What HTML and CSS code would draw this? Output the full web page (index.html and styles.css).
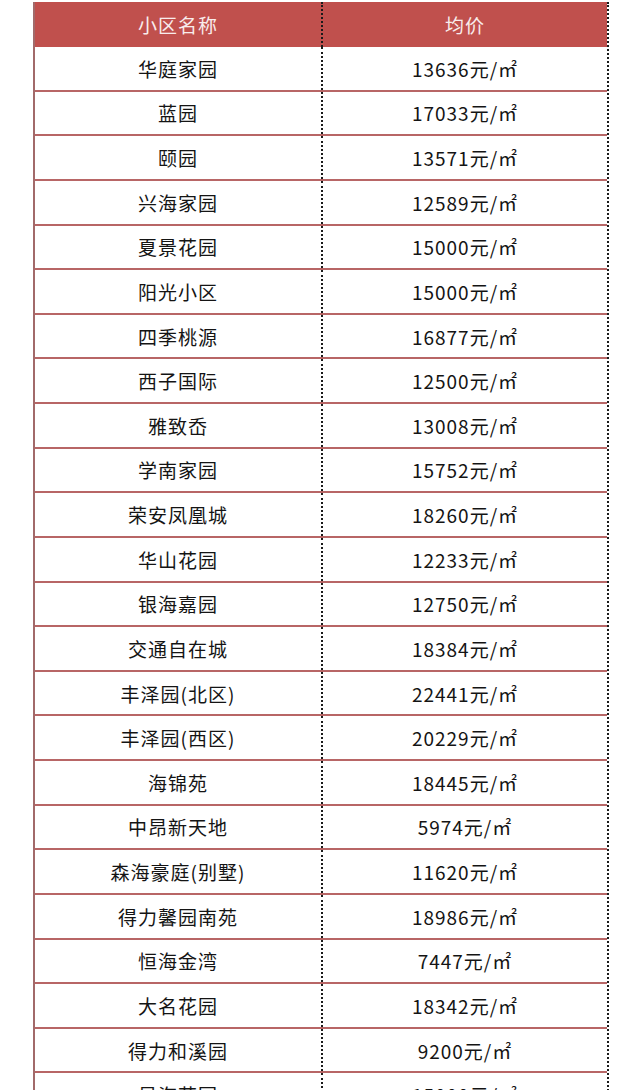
FILE: index.html
```html
<!DOCTYPE html>
<html lang="zh">
<head>
<meta charset="utf-8">
<link rel="stylesheet" href="styles.css">
</head>
<body>
<div class="table">
  <div class="row head"><div class="cell">小区名称</div><div class="cell price">均价</div></div>
  <div class="row"><div class="cell">华庭家园</div><div class="cell price">13636元/㎡</div></div>
  <div class="row"><div class="cell">蓝园</div><div class="cell price">17033元/㎡</div></div>
  <div class="row"><div class="cell">颐园</div><div class="cell price">13571元/㎡</div></div>
  <div class="row"><div class="cell">兴海家园</div><div class="cell price">12589元/㎡</div></div>
  <div class="row"><div class="cell">夏景花园</div><div class="cell price">15000元/㎡</div></div>
  <div class="row"><div class="cell">阳光小区</div><div class="cell price">15000元/㎡</div></div>
  <div class="row"><div class="cell">四季桃源</div><div class="cell price">16877元/㎡</div></div>
  <div class="row"><div class="cell">西子国际</div><div class="cell price">12500元/㎡</div></div>
  <div class="row"><div class="cell">雅致岙</div><div class="cell price">13008元/㎡</div></div>
  <div class="row"><div class="cell">学南家园</div><div class="cell price">15752元/㎡</div></div>
  <div class="row"><div class="cell">荣安凤凰城</div><div class="cell price">18260元/㎡</div></div>
  <div class="row"><div class="cell">华山花园</div><div class="cell price">12233元/㎡</div></div>
  <div class="row"><div class="cell">银海嘉园</div><div class="cell price">12750元/㎡</div></div>
  <div class="row"><div class="cell">交通自在城</div><div class="cell price">18384元/㎡</div></div>
  <div class="row"><div class="cell">丰泽园(北区)</div><div class="cell price">22441元/㎡</div></div>
  <div class="row"><div class="cell">丰泽园(西区)</div><div class="cell price">20229元/㎡</div></div>
  <div class="row"><div class="cell">海锦苑</div><div class="cell price">18445元/㎡</div></div>
  <div class="row"><div class="cell">中昂新天地</div><div class="cell price">5974元/㎡</div></div>
  <div class="row"><div class="cell">森海豪庭(别墅)</div><div class="cell price">11620元/㎡</div></div>
  <div class="row"><div class="cell">得力馨园南苑</div><div class="cell price">18986元/㎡</div></div>
  <div class="row"><div class="cell">恒海金湾</div><div class="cell price">7447元/㎡</div></div>
  <div class="row"><div class="cell">大名花园</div><div class="cell price">18342元/㎡</div></div>
  <div class="row"><div class="cell">得力和溪园</div><div class="cell price">9200元/㎡</div></div>
  <div class="row"><div class="cell">星海花园</div><div class="cell price">15000元/㎡</div></div>
</div>
</body>
</html>
```
FILE: styles.css
```css
html, body {
  margin: 0;
  padding: 0;
  background: #ffffff;
}
body {
  font-family: "Noto Sans CJK SC", "Noto Sans", sans-serif;
  color: #141414;
}
.table {
  margin: 2px 0 0 33px;
  width: 576px;
  border-left: 2px solid #a26a6a;
  border-right: 2px dotted #1a1a1a;
  box-sizing: border-box;
}
.row {
  display: grid;
  grid-template-columns: 286px 286px;
  height: 44.64px;
  box-sizing: border-box;
  border-bottom: 2px solid #b86666;
}
.row.head {
  height: 45px;
  background: #c0504d;
  color: #f8ecec;
  border-bottom: none;
}
.cell {
  display: flex;
  align-items: center;
  justify-content: center;
  font-size: 19px;
  letter-spacing: 1px;
  line-height: 1;
}
.price {
  border-left: 2px dotted #1a1a1a;
}
```
